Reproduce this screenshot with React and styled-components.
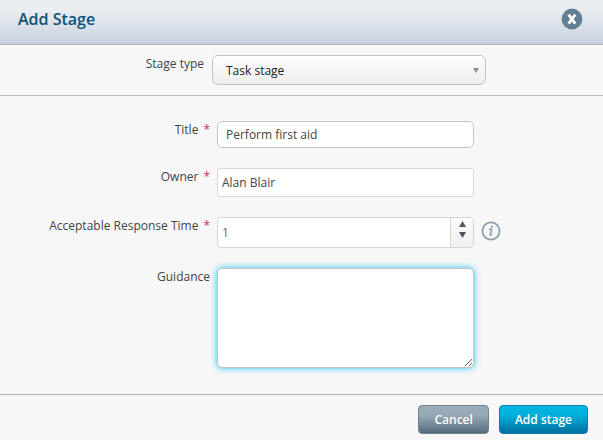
import React from 'react';
import styled, { createGlobalStyle, css } from 'styled-components';

const GlobalStyle = createGlobalStyle`
  * {
    box-sizing: border-box;
  }

  body {
    margin: 0;
    background: #f7f7f7;
    color: #444;
    font-family: 'Open Sans', 'Noto Sans', sans-serif;
    font-size: 12px;
    line-height: 18px;
  }

  button, input, select, textarea {
    margin: 0;
    font: inherit;
    color: inherit;
  }
`;

const Header = styled.header`
  display: flex;
  align-items: center;
  justify-content: space-between;
  padding: 8px 20px 14px 18px;
  border-bottom: 1px solid #b0b6bc;
  background: linear-gradient(#e9edf2 0%, #e9edf0 22%, #d9e0ea 60%, #c6d0dc 100%);
`;

const Title = styled.h1`
  margin: 0;
  color: #0b5377;
  font-size: 16px;
  font-weight: 600;
  line-height: 22px;
`;

const CloseButton = styled.button`
  display: flex;
  padding: 0;
  border: 0;
  background: none;
  cursor: pointer;
`;

const TypeSection = styled.div`
  padding: 10px 0;
  border-bottom: 1px solid #bbb;
`;

const Fields = styled.div`
  display: grid;
  gap: 20px;
  padding: 25px 0 26px;
`;

const Row = styled.div`
  display: grid;
  grid-template-columns: ${({ $wide }) =>
    $wide ? '204px minmax(0, 274px)' : '210px minmax(0, 257px) auto'};
  column-gap: ${({ $wide }) => ($wide ? '8px' : '7px')};
  justify-content: start;
`;

const Label = styled.label`
  text-align: right;
`;

const Required = styled.span`
  margin-left: 5px;
  color: #e0217a;
`;

const SelectWrap = styled.div`
  display: grid;
  align-items: center;

  > * {
    grid-area: 1 / 1;
  }

  svg {
    justify-self: end;
    margin-right: 7px;
    pointer-events: none;
  }
`;

const Select = styled.select`
  width: 100%;
  height: 30px;
  padding: 2px 24px 0 13px;
  appearance: none;
  border: 1px solid #c4c4c4;
  border-radius: 6px;
  background: linear-gradient(#fff, #ececec);
  color: #222;
`;

const fieldStyles = css`
  width: 100%;
  border: 1px solid #d6d6d6;
  border-radius: 4px;
  background: #fff;
  outline: none;
`;

const Input = styled.input`
  ${fieldStyles}
  height: ${({ $lookup }) => ($lookup ? '29px' : '27px')};
  padding: 0 ${({ $lookup }) => ($lookup ? '4px' : '8px')};
  border-color: ${({ $lookup }) => ($lookup ? '#d9d9d9' : '#c4c4c4')};
  border-radius: ${({ $lookup }) => ($lookup ? '3px' : '5px')};
`;

const NumberField = styled.div`
  ${fieldStyles}
  display: flex;
  height: 31px;
  overflow: hidden;
`;

const NumberInput = styled.input`
  flex: 1;
  min-width: 0;
  padding: 0 4px;
  border: 0;
  outline: none;
  background: none;
  color: #666;
  appearance: textfield;

  &::-webkit-inner-spin-button,
  &::-webkit-outer-spin-button {
    appearance: none;
    margin: 0;
  }
`;

const Spinner = styled.div`
  display: flex;
  flex-direction: column;
  width: 23px;
  padding-bottom: 6px;
  border-left: 1px solid #d6d6d6;
  background: linear-gradient(#fbfbfb, #efefef);
`;

const SpinButton = styled.button`
  display: flex;
  flex: 1;
  align-items: center;
  justify-content: center;
  padding: 0;
  border: 0;
  background: none;
  cursor: pointer;
`;

const InfoButton = styled.button`
  display: flex;
  align-self: center;
  margin-top: -3px;
  padding: 0;
  border: 0;
  background: none;
  cursor: help;
`;

const TextArea = styled.textarea`
  ${fieldStyles}
  display: block;
  height: 100px;
  padding: 5px 8px;
  border-color: #c4c4c4;
  border-radius: 5px;
  box-shadow: 0 0 7px #22c3ee;
  resize: both;
`;

const Footer = styled.footer`
  display: flex;
  justify-content: flex-end;
  gap: 10px;
  padding: 10px 15px 6px;
  border-top: 1px solid #b4b4b4;
`;

const Button = styled.button`
  height: 29px;
  padding: 0 15px;
  border: 1px solid ${({ $primary }) => ($primary ? '#077fa9' : '#6e8290')};
  border-radius: 4px;
  background: ${({ $primary }) =>
    $primary
      ? 'linear-gradient(#00b5e2 0%, #00afdd 35%, #006f9e 100%)'
      : 'linear-gradient(#9aadb9 0%, #96a8b4 35%, #566c7b 100%)'};
  color: #fff;
  font-weight: 600;
  cursor: pointer;
`;

const App = () => {
  const [responseTime, setResponseTime] = React.useState(1);

  return (
    <>
      <GlobalStyle />
      <form onSubmit={(e) => e.preventDefault()}>
        <Header>
          <Title>Add Stage</Title>
          <CloseButton type="button" aria-label="Close">
            <svg width="22" height="22" viewBox="0 0 22 22">
              <circle cx="11" cy="11" r="10.4" fill="#617f92" />
              <path d="M7.6 6.6 L14.2 15.6 M14.2 6.6 L7.6 15.6" stroke="#fff" strokeWidth="2.8" />
            </svg>
          </CloseButton>
        </Header>

        <TypeSection>
          <Row $wide>
            <Label htmlFor="stage-type">Stage type</Label>
            <SelectWrap>
              <Select id="stage-type" defaultValue="task">
                <option value="task">Task stage</option>
              </Select>
              <svg width="6" height="5" viewBox="0 0 6 5">
                <path d="M0 0h6L3 5z" fill="#8d8d8d" />
              </svg>
            </SelectWrap>
          </Row>
        </TypeSection>

        <Fields>
          <Row>
            <Label htmlFor="title">
              Title<Required>*</Required>
            </Label>
            <Input id="title" type="text" defaultValue="Perform first aid" />
          </Row>

          <Row>
            <Label htmlFor="owner">
              Owner<Required>*</Required>
            </Label>
            <Input id="owner" type="text" defaultValue="Alan Blair" $lookup />
          </Row>

          <Row>
            <Label htmlFor="response-time">
              Acceptable Response Time<Required>*</Required>
            </Label>
            <NumberField>
              <NumberInput
                id="response-time"
                type="number"
                value={responseTime}
                onChange={(e) => setResponseTime(Number(e.target.value))}
              />
              <Spinner>
                <SpinButton type="button" aria-label="Increase" onClick={() => setResponseTime(responseTime + 1)}>
                  <svg width="7" height="6" viewBox="0 0 7 6">
                    <path d="M0 6h7L3.5 0z" fill="#4a5565" />
                  </svg>
                </SpinButton>
                <SpinButton type="button" aria-label="Decrease" onClick={() => setResponseTime(responseTime - 1)}>
                  <svg width="7" height="6" viewBox="0 0 7 6">
                    <path d="M0 0h7L3.5 6z" fill="#4a5565" />
                  </svg>
                </SpinButton>
              </Spinner>
            </NumberField>
            <InfoButton type="button" aria-label="About response time">
              <svg width="20" height="20" viewBox="0 0 20 20" fill="none" stroke="#8b9ba6">
                <circle cx="10" cy="10" r="8.6" strokeWidth="1.7" />
                <path d="M8 8.3h2.6L9.3 13.4q-.1.8.6.6l1-.7" strokeWidth="1.5" />
                <circle cx="10.9" cy="5.7" r="1.1" fill="#8b9ba6" stroke="none" />
              </svg>
            </InfoButton>
          </Row>

          <Row>
            <Label htmlFor="guidance">Guidance</Label>
            <TextArea id="guidance" />
          </Row>
        </Fields>

        <Footer>
          <Button type="button">Cancel</Button>
          <Button type="submit" $primary>
            Add stage
          </Button>
        </Footer>
      </form>
    </>
  );
};

export default App;
